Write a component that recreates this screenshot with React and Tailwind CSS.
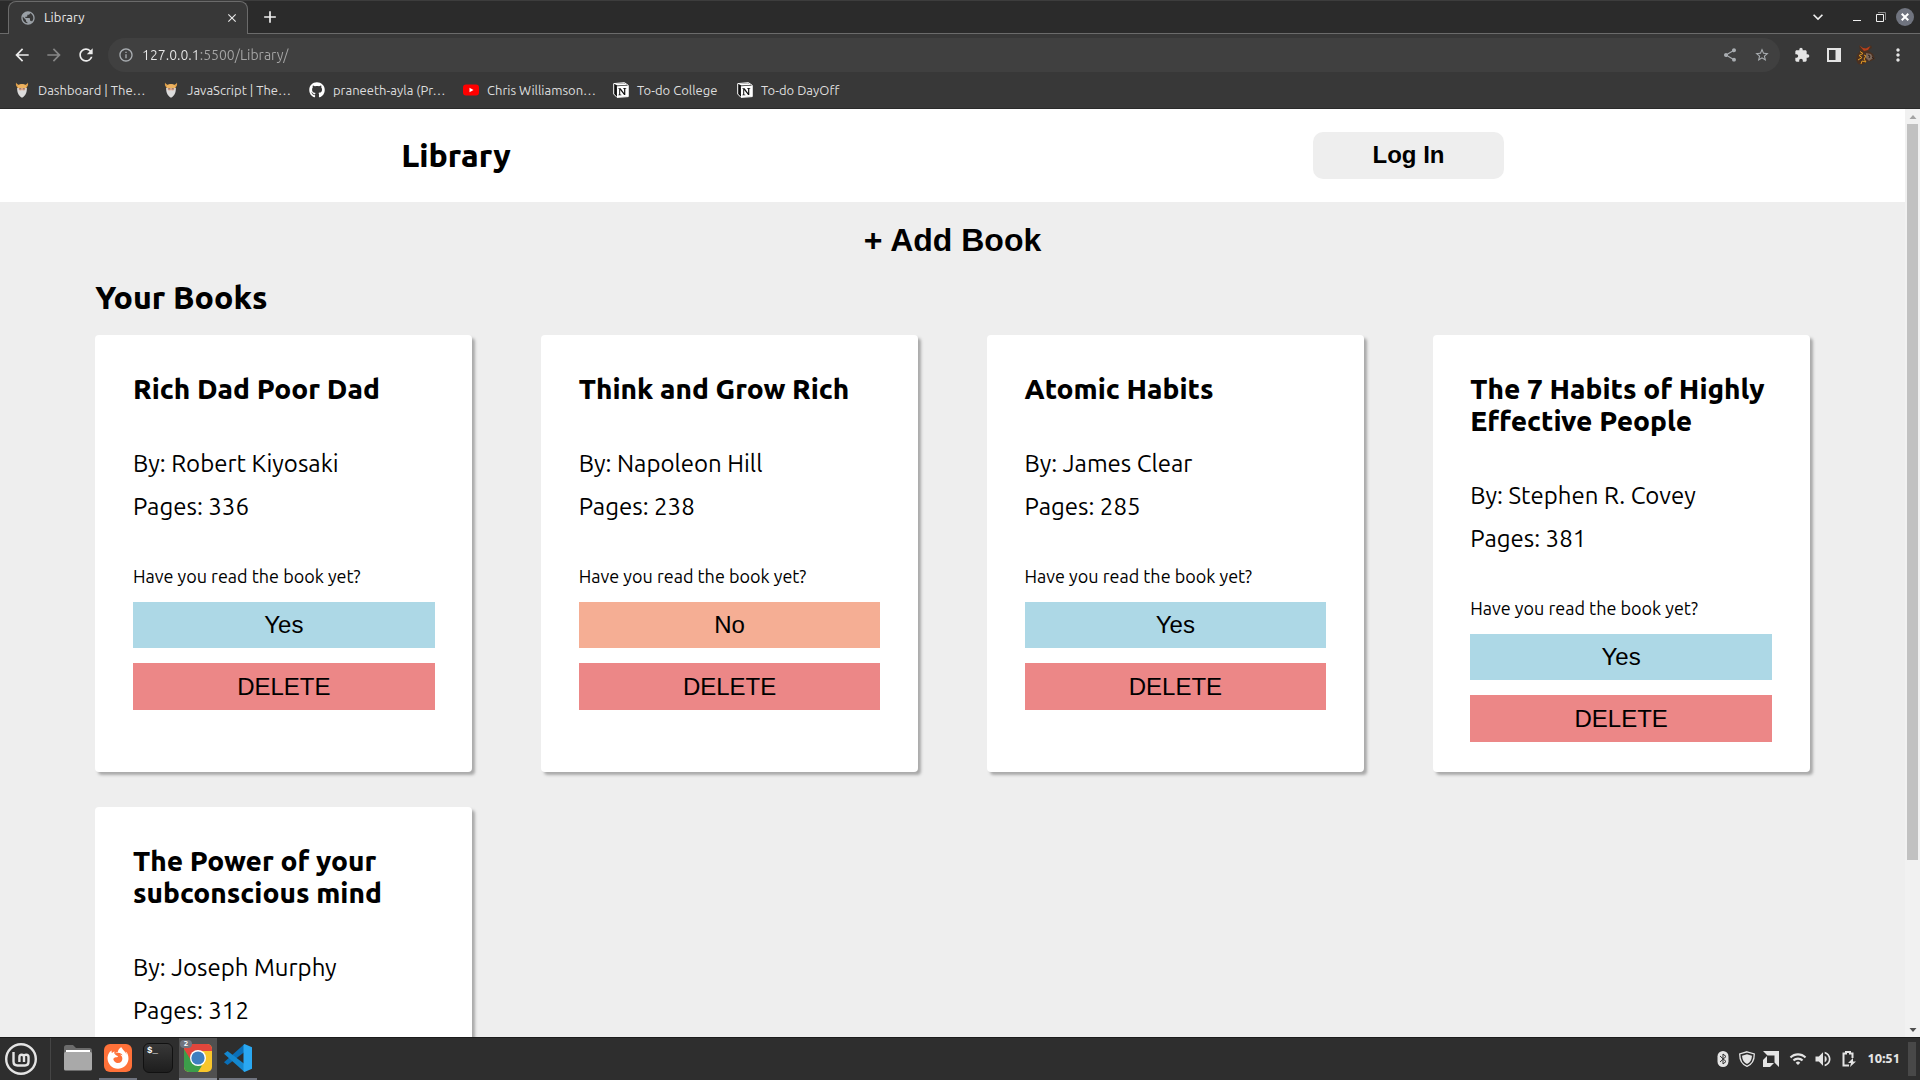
import React from "react";
import {
  MdArrowBack, MdArrowForward, MdRefresh, MdInfoOutline, MdClose, MdAdd, MdPublic,
  MdShare, MdStarBorder, MdExtension, MdMoreVert, MdExpandMore, MdVolumeUp, MdWifi,
} from "react-icons/md";
import { FaGithub, FaFirefoxBrowser } from "react-icons/fa";

const books = [
  { title: "Rich Dad Poor Dad", author: "Robert Kiyosaki", pages: 336, read: true },
  { title: "Think and Grow Rich", author: "Napoleon Hill", pages: 238, read: false },
  { title: "Atomic Habits", author: "James Clear", pages: 285, read: true },
  { title: "The 7 Habits of Highly Effective People", author: "Stephen R. Covey", pages: 381, read: true },
  { title: "The Power of your subconscious mind", author: "Joseph Murphy", pages: 312, read: true },
];

const OdinIcon = () => (
  <svg viewBox="0 0 16 16" className="size-4 shrink-0">
    <path d="M2 .5c-.4 2.500.2 4.200 2 5h8c1.800-.8 2.400-2.500 2-5-.8 1.300-1.700 2.200-3 2.400-2-.8-4-.8-6 0C3.700 2.700 2.800 1.800 2 .5z" fill="#e0a04a" />
    <path d="M3.500 5.500C3.300 3.300 5 2 8 2s4.700 1.300 4.500 3.500v1h-9z" fill="#edb25f" />
    <path d="M3.200 6h9.600c.3 4-1.300 8-4.800 9.800C4.500 14 2.900 10 3.200 6z" fill="#dcdcdc" />
    <path d="M4.700 6h6.600v2c-1 .6-2 .3-3.300.3S5.700 8.600 4.700 8z" fill="#d9a58b" />
    <path d="M5.500 6.800h1.200M9.300 6.800h1.200" stroke="#444" strokeWidth=".8" />
  </svg>
);

const YoutubeIcon = () => (
  <svg viewBox="0 0 16 16" className="size-4 shrink-0">
    <rect y="2.500" width="16" height="11" rx="3" fill="#f00" />
    <path d="M6.500 5.700v4.600l4-2.300z" fill="#fff" />
  </svg>
);

const NotionIcon = () => (
  <svg viewBox="0 0 16 16" className="size-4 shrink-0">
    <path d="M.7 1.600 11.500.7 15.300 3.400V14.600L4 15.400.7 12z" fill="#111" stroke="#fff" strokeWidth="1" strokeLinejoin="round" />
    <path d="M3.900 4.200 15 3.500v11L4 15.200z" fill="#fff" />
    <path d="M1.500 1.900 11.300 1.200 14 3l-9.600.6z" fill="#fff" />
    <path d="M5.300 6.200h2.300l3.500 4.800V6.800L10 6.500V6h3.300v.5l-1 .3V13h-1.200L7.200 7.900v4.500l1.200.3v.5H5.300v-.5l.9-.3V6.900l-.9-.2z" fill="#111" />
  </svg>
);

const GithubMark = () => <FaGithub className="size-4 shrink-0 text-white" />;

const bookmarks = [
  { label: "Dashboard | The…", Icon: OdinIcon, width: "w-[109px]" },
  { label: "JavaScript | The…", Icon: OdinIcon, width: "w-[106px]" },
  { label: "praneeth-ayla (Pr…", Icon: GithubMark, width: "w-[114px]" },
  { label: "Chris Williamson…", Icon: YoutubeIcon, width: "w-[110px]" },
  { label: "To-do College", Icon: NotionIcon, width: "w-[84px]" },
  { label: "To-do DayOff", Icon: NotionIcon, width: "w-[84px]" },
];

function TabStrip() {
  return (
    <div className="flex h-[34px] items-stretch border-t border-[#3d3d3d] bg-[#2b2b2b]">
      <div className="w-2 border-b border-[#6b6b6b]" />
      <div className="flex w-60 items-center rounded-t-lg border border-b-0 border-[#6b6b6b] bg-[#383838] pl-[11px] pr-2">
        <MdPublic className="size-4 text-[#9aa0a6]" />
        <span className="ml-2 flex-1 pb-0.5 text-[13px] leading-5 text-[#e8e8e8]">Library</span>
        <button aria-label="Close tab" className="text-[#e8e8e8]"><MdClose className="size-3.5" /></button>
      </div>
      <div className="flex flex-1 items-center border-b border-[#6b6b6b] pl-3 pr-1.5 text-[#f0f0f0]">
        <button aria-label="New tab"><MdAdd className="size-5" /></button>
        <span className="flex-1" />
        <button aria-label="Search tabs" className="mr-[25px]"><MdExpandMore className="size-5" /></button>
        <button aria-label="Minimize" className="mr-[15px]">
          <svg viewBox="0 0 8 12" className="h-3 w-2"><path d="M0 9.500h8" stroke="#f0f0f0" /></svg>
        </button>
        <button aria-label="Restore" className="mr-2.5">
          <svg viewBox="0 0 10 10" className="size-2.5" fill="none">
            <path d="M2 .5h7.500V8" stroke="#8a8a8a" /><path d="M.5 2.500h7v7h-7z" stroke="#f0f0f0" />
          </svg>
        </button>
        <button aria-label="Close window" className="flex size-[18px] items-center justify-center rounded-full bg-[#70747f]">
          <svg viewBox="0 0 8 8" className="size-2"><path d="m.7.7 6.600 6.600m0-6.600L.7 7.300" stroke="#fff" strokeWidth="2" /></svg>
        </button>
      </div>
    </div>
  );
}

function Toolbar() {
  return (
    <div className="flex h-[38px] items-end bg-[#383838] pr-3">
      <div className="flex h-[34px] w-[108px] items-center gap-3 pl-3">
        <button aria-label="Back"><MdArrowBack className="size-5 text-[#ececec]" /></button>
        <button aria-label="Forward"><MdArrowForward className="size-5 text-[#868686]" /></button>
        <button aria-label="Reload"><MdRefresh className="size-5 text-[#ececec]" /></button>
      </div>
      <div className="flex h-[34px] flex-1 items-center rounded-full bg-[#404040] pl-2.5 pr-2.5 text-[#a9adb1]">
        <MdInfoOutline className="size-4" />
        <input
          aria-label="Address"
          defaultValue="127.0.0.1:5500/Library/"
          className="ml-2 min-w-0 flex-1 bg-[linear-gradient(90deg,#e8e8e8_57px,#a6a6a6_57px)] bg-clip-text text-sm text-transparent outline-none"
        />
        <button aria-label="Share"><MdShare className="size-4" /></button>
        <button aria-label="Bookmark this tab" className="ml-4"><MdStarBorder className="size-4" /></button>
      </div>
      <div className="flex h-[34px] items-center pl-3.5 text-[#e4e4e4]">
        <button aria-label="Extensions"><MdExtension className="size-4" /></button>
        <button aria-label="Side panel" className="ml-[17px]">
          <svg viewBox="0 0 14 14" className="size-3.5"><path fillRule="evenodd" d="M0 0h14v14H0zM2 2v10h6.500V2z" fill="#e4e4e4" /></svg>
        </button>
        <button aria-label="Profile" className="ml-3.5">
          <svg viewBox="0 0 20 22" className="h-[22px] w-5">
            <path d="M4 1c1 2 2.500 3 6 3s5-1 6-3l1 3-4 2.500L18 10l2 5-4 2-5 1-3 3-5-1-2-4 1-5 3-4z" fill="#4a3020" />
            <path d="M4.500 1.500 8 4l3 .5L15.500 2 13 6 9 7z" fill="#b8401c" />
            <path d="M5 7.500l3 2-4 2 3 2-4 2.500m6-5 2 1-2 3 2 3-4-1-1 3" stroke="#e09a24" strokeWidth="1" fill="none" />
            <path d="m11 9 5 1 2 4-4 3-3-3z" fill="#7c6658" />
            <path d="m13 11 2 1-1 2m3-1 2 2" stroke="#2c2320" fill="none" />
          </svg>
        </button>
        <button aria-label="Menu" className="ml-[13px]"><MdMoreVert className="size-5" /></button>
      </div>
    </div>
  );
}

function Bookmarks() {
  return (
    <nav className="flex h-[37px] items-center gap-4 border-b border-[#2a2a2a] bg-[#383838] pl-3.5 text-[13px] leading-5 text-[#dedede]">
      {bookmarks.map(({ label, Icon, width }) => (
        <a key={label} href="#" className="flex items-center gap-2">
          <Icon />
          <span className={`${width} whitespace-nowrap`}>{label}</span>
        </a>
      ))}
    </nav>
  );
}

function BookCard({ book }) {
  return (
    <article className="flex flex-col rounded bg-white px-[10%] pb-[30px] pt-[38px] shadow-[3px_3px_3px_#a9a9a9]">
      <h3 className="text-[28px] font-extrabold leading-8">{book.title}</h3>
      <div className="mt-[37px] text-2xl">
        <p className="font-[450] leading-[43px]">By: {book.author}</p>
        <p className="font-[450] leading-[43px]">Pages: {book.pages}</p>
      </div>
      <p className="mt-9 text-lg font-[450] leading-6">Have you read the book yet?</p>
      <button
        className={`mt-3.5 h-[46px] font-['Liberation_Sans',sans-serif] text-2xl ${book.read ? "bg-[#add8e6]" : "bg-[#f5ae94]"}`}
      >
        {book.read ? "Yes" : "No"}
      </button>
      <button className="mt-[15px] h-[47px] bg-[#ec8787] font-['Liberation_Sans',sans-serif] text-2xl">DELETE</button>
    </article>
  );
}

function Page() {
  return (
    <main className="min-w-0 flex-1 overflow-y-auto bg-[#eeeeee] text-black [scrollbar-width:none]">
      <header className="flex h-[93px] items-center justify-around bg-white">
        <h1 className="pb-0.5 text-[32px] font-extrabold leading-10">Library</h1>
        <button className="h-[47px] w-[10%] rounded-[10px] bg-[#eeeeee] pb-0.5 font-['Liberation_Sans',sans-serif] text-2xl font-bold">Log In</button>
      </header>
      <div className="flex justify-center pt-[18px]">
        <button className="h-10 font-['Liberation_Sans',sans-serif] text-[32px] font-bold leading-10">+ Add Book</button>
      </div>
      <section className="mx-[5%] mt-[17px]">
        <h2 className="text-[32px] font-extrabold leading-10">Your Books</h2>
        <div className="mt-[18px] grid grid-cols-4 gap-x-[4%] gap-y-[35px] pb-10">
          {books.map((b) => <BookCard key={b.title} book={b} />)}
        </div>
      </section>
    </main>
  );
}

function Scrollbar() {
  return (
    <div className="flex w-[15px] flex-col items-center bg-[#f1f1f1]">
      <svg viewBox="0 0 15 15" className="size-[15px] shrink-0"><path d="M4.500 10h7L8 6z" fill="#a3a3a3" /></svg>
      <div className="w-full min-h-0 flex-1 px-0.5"><div className="h-[82%] bg-[#c1c1c1]" /></div>
      <svg viewBox="0 0 15 15" className="size-[15px] shrink-0"><path d="M4.500 6h7L8 10z" fill="#505050" /></svg>
    </div>
  );
}

const FolderIcon = () => (
  <svg viewBox="0 0 28 28" className="size-7">
    <path d="M0 3.500Q0 1 2.500 1H9l3 3h13.500Q28 4 28 6.500V12H0z" fill="#6b6b6b" />
    <path d="M2 6h24v4H2z" fill="#fff" />
    <rect y="8" width="28" height="18.500" rx="1.500" fill="#a9a9a9" />
  </svg>
);
const FirefoxTile = () => (
  <span className="flex size-7 items-center justify-center rounded-md bg-[#ff7139]">
    <FaFirefoxBrowser className="size-[22px] text-white" />
  </span>
);
const TerminalTile = () => (
  <span className="block size-[30px] rounded-md border border-[#111] bg-linear-to-b from-[#383838] to-[#1e1e1e] pl-[3px] pt-px text-left font-['Liberation_Mono',monospace] text-[9px] font-bold leading-3 text-white">
    $_
  </span>
);
const ChromeTile = () => (
  <span className="relative">
    <svg viewBox="0 0 28 28" className="size-7">
      <defs><clipPath id="chromeTile"><rect width="28" height="28" rx="5" /></clipPath></defs>
      <g clipPath="url(#chromeTile)">
        <path d="M0 0h28v28H0z" fill="#f9c62b" />
        <path d="M0 0h28v7H14l-8 11L0 6z" fill="#e2463c" />
        <path d="M0 5l8 13 6 3.500h4L14 28H0z" fill="#3c9e4a" />
      </g>
      <circle cx="14" cy="14" r="8" fill="#fff" />
      <circle cx="14" cy="14" r="6.600" fill="#3f7fc0" />
    </svg>
    <span className="absolute -left-1 -top-1 flex h-2 w-3 items-center justify-center rounded-full bg-[#70747f] text-[8px] font-bold leading-none text-white">2</span>
  </span>
);
const CodeIcon = () => (
  <svg viewBox="0 0 28 28" className="size-7">
    <path d="M20.500 0v8L3.500 21 0 18.300z" fill="#0a6fb8" />
    <path d="M20.500 28v-8L3.500 7 0 9.700z" fill="#1488d0" />
    <path d="M20.500 0 28 3.300v21.400L20.500 28l-1-1V1z" fill="#2aa8f2" />
  </svg>
);

const launchers = [
  { name: "Files", Icon: FolderIcon, style: "border-transparent" },
  { name: "Firefox", Icon: FirefoxTile, style: "border-[#70747f]" },
  { name: "Terminal", Icon: TerminalTile, style: "border-transparent" },
  { name: "Chrome", Icon: ChromeTile, style: "border-[#8a8e98] bg-[#505050]" },
  { name: "Visual Studio Code", Icon: CodeIcon, style: "border-[#70747f]" },
];

function Taskbar() {
  return (
    <footer className="flex h-[43px] shrink-0 items-center border-t border-[#1c1c1c] bg-[#2e2e2e] pl-[5px] pr-1 text-[#e4e4e4]">
      <button aria-label="Menu">
        <svg viewBox="0 0 32 32" className="size-8" fill="none" stroke="#e4e4e4">
          <circle cx="16" cy="16" r="14.800" strokeWidth="2.400" />
          <path d="M8.500 9v9.500q0 4 4 4H20q3.500 0 3.500-4V14q0-2.300-2.300-2.300T19 14v5m0-5q0-2.300-2.300-2.300T14.400 14v5" strokeWidth="2.400" />
        </svg>
      </button>
      <span className="ml-[13px] h-full w-px bg-[#454545]" />
      <div className="ml-2 flex h-full gap-0.5">
        {launchers.map(({ name, Icon, style }) => (
          <button key={name} aria-label={name} className={`flex w-[38px] items-center justify-center border-b-2 ${style}`}><Icon /></button>
        ))}
      </div>
      <div className="ml-auto flex items-center">
        <svg viewBox="0 0 12 16" className="h-4 w-3">
          <rect x=".5" width="11" height="16" rx="5.500" fill="#e4e4e4" />
          <path d="m3 5 6 5.500L6 13V3l3 2.500L3 11" stroke="#2e2e2e" fill="none" />
        </svg>
        <svg viewBox="0 0 16 16" className="ml-2.5 size-4">
          <path d="M8 .8 15.300 3C15.300 9 13 13.500 8 15.300 3 13.500.7 9 .7 3z" fill="none" stroke="#e4e4e4" strokeWidth="1.300" />
          <path d="m8 3.300 5 1.500c-.2 4-2 7-5 8.200-3-1.200-4.800-4.200-5-8.200z" fill="#e4e4e4" />
        </svg>
        <svg viewBox="0 0 16 16" className="ml-2 size-4" fill="#e4e4e4">
          <path d="M0 0h16v16l-4.500-4.500v-7h-7zM4 5v7h7l-4 4H0V9z" />
        </svg>
        <MdWifi className="ml-2.5 size-[18px]" />
        <MdVolumeUp className="ml-1.5 size-5" />
        <svg viewBox="0 0 16 16" className="ml-2 size-4">
          <path d="M8 14.500H2.500V2.500H5V1h4v1.500h2.500V7" fill="none" stroke="#e4e4e4" strokeWidth="2" />
          <path d="m12 7-5 5h3l-1 4 6-5.500h-3z" fill="#e4e4e4" />
        </svg>
        <time className="ml-2.5 text-[13px] font-extrabold">10:51</time>
        <button aria-label="Show desktop" className="ml-2 h-[34px] w-2 bg-[#484848]" />
      </div>
    </footer>
  );
}

export default function App() {
  return (
    <div className="flex h-screen flex-col overflow-hidden font-[Ubuntu,'Noto_Sans',sans-serif]">
      <TabStrip />
      <Toolbar />
      <Bookmarks />
      <div className="flex min-h-0 flex-1">
        <Page />
        <Scrollbar />
      </div>
      <Taskbar />
    </div>
  );
}
